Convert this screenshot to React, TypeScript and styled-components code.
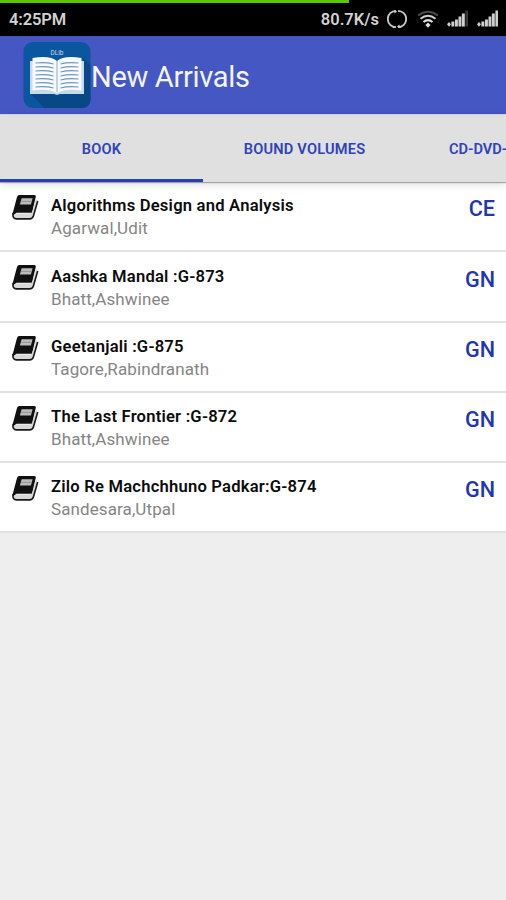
import React from "react";
import styled, { createGlobalStyle } from "styled-components";

const GlobalStyle = createGlobalStyle`
  * { box-sizing: border-box; }
  body {
    margin: 0;
    background: #eeeeee;
    font-family: Roboto, "Liberation Sans", sans-serif;
  }
`;

const Screen = styled.div`
  width: 506px;
  height: 900px;
  display: flex;
  flex-direction: column;
  overflow: hidden;
  background: #eeeeee;
`;

const StatusBar = styled.header`
  flex: none;
  height: 36px;
  display: flex;
  flex-direction: column;
  background: #000;
  color: #d2d2d2;
`;

const Progress = styled.div`
  width: 349px;
  height: 2.5px;
  background: #5cc800;
`;

const StatusRow = styled.div`
  flex: 1;
  display: flex;
  align-items: center;
  padding: 0 7px 0 9px;
`;

const Clock = styled.span`
  flex: 1;
  font-size: 16.5px;
  font-weight: 600;
  letter-spacing: -0.1px;
`;

const Speed = styled.span`
  font-size: 16.5px;
  font-weight: 600;
  margin-right: 8px;
`;

const StatusIcons = styled.div`
  display: flex;
  align-items: center;
  gap: 8px;

  > :first-child {
    margin-right: 2px;
  }
`;

const AppBar = styled.div`
  flex: none;
  height: 78px;
  display: flex;
  align-items: center;
  padding-left: 23px;
  background: #4457c3;
`;

const AppTitle = styled.h1`
  margin: 3px 0 0;
  font-size: 29px;
  font-weight: 400;
  line-height: 36px;
  letter-spacing: -0.3px;
  color: #f3f5ff;
  white-space: nowrap;
`;

const Tabs = styled.nav`
  flex: none;
  position: relative;
  z-index: 1;
  height: 68px;
  display: flex;
  background: #e0e0e0;
  border-top: 1px solid #cfcfdd;
  box-shadow: 0 1px 1px rgba(0, 0, 0, 0.3), 0 3px 8px rgba(0, 0, 0, 0.12);
`;

const Tab = styled.div<{ $active?: boolean; $peek?: boolean }>`
  flex: ${(p) => (p.$peek ? "1" : "none")};
  width: ${(p) => (p.$peek ? "auto" : "203px")};
  display: flex;
  align-items: center;
  justify-content: ${(p) => (p.$peek ? "flex-start" : "center")};
  padding-top: ${(p) => (p.$active ? 3 : 0)}px;
  padding-left: ${(p) => (p.$peek ? 43 : 0)}px;
  border-bottom: ${(p) => (p.$active ? "3px solid #283fb4" : "none")};
  font-size: 14.6px;
  font-weight: 600;
  letter-spacing: ${(p) => (p.$peek ? 0 : 0.2)}px;
  color: #2f43b8;
  white-space: nowrap;
`;

const List = styled.ul`
  flex: none;
  margin: 0;
  padding: 0;
  list-style: none;
`;

const Row = styled.li`
  height: 70.25px;
  display: flex;
  align-items: flex-start;
  padding: 12px 11px 0 12px;
  background: #fff;
  border-bottom: 2px solid #e2e2e2;
`;

const Details = styled.div`
  flex: 1;
  margin: 0.4px 0 0 12px;
`;

const Title = styled.div`
  font-size: 16.6px;
  font-weight: 600;
  line-height: 23px;
  letter-spacing: 0.21px;
  color: #0c0c0c;
  white-space: nowrap;
`;

const Author = styled.div`
  font-size: 17px;
  line-height: 23px;
  letter-spacing: 0.1px;
  color: #858585;
`;

const Category = styled.div`
  margin-top: 0.4px;
  font-size: 21.6px;
  font-weight: 500;
  line-height: 30px;
  color: #2236b0;
`;

const BookIcon = () => (
  <svg width="27" height="27" viewBox="0 0 27 27">
    <path d="M7.2 1 H22.3 Q24.2 1 23.8 2.8 L20 18.8 H4.5 L1 21.5 Q.4 20.6 .9 18.6 L5 3 Q5.6 1 7.2 1Z" fill="#101010" />
    <path d="M4.5 19.6 H17.8 Q19.8 19.6 20.4 17.8 L24 4.5 L25.3 6.5 L21.2 21.5 Q20.3 24.3 18 24.3 H4.6 Q1.8 24.2 1.9 21.9 Q2 19.8 4.5 19.6Z" fill="#d8d8d8" />
    <path d="M1.1 18.8 Q.2 24.9 4.5 24.9 H17.6 Q20.5 24.9 21.4 22 L25.7 7" fill="none" stroke="#181818" strokeWidth="1.6" />
    <path d="M9.6 4.3 H20.6 L18.9 10.6 H7.9Z" fill="#bcbcbc" />
    <path d="M8.8 7.4 H19.8" stroke="#8a8a8a" strokeWidth="0.8" />
  </svg>
);

const AppLogo = () => (
  <svg width="68" height="68" viewBox="0 0 68 68">
    <rect x="0.5" y="1" width="67" height="66" rx="9" fill="#0a579f" />
    <path d="M7 52 L21 67 H58.5 Q67.5 67 67.5 58 V24 L60 17 V52Z" fill="#084886" />
    <text x="34" y="13.5" textAnchor="middle" fontSize="6.5" fill="#c6dcf0">DLib</text>
    <path d="M7 20 H61 V53 H37 L34 54 L31 53 H7Z" fill="#c6daee" />
    <path d="M9.5 17 Q27 14 34 20 Q41 14 58.5 17 V49.5 Q43 47 34 52 Q25 47 9.5 49.5Z" fill="#f6faff" />
    <path d="M34 20V51" stroke="#a8c3dd" strokeWidth="1.4" />
    <g fill="none" stroke="#7297b6" strokeWidth="1.2">
      {[22, 26, 30, 34, 38, 42, 46].map((y) => (
        <path key={y} d={`M12.5 ${y} Q23 ${y - 1} 30.5 ${y + 1} M37.5 ${y + 1} Q45 ${y - 1} 55.5 ${y}`} />
      ))}
    </g>
  </svg>
);

const SyncIcon = () => (
  <svg width="20" height="20" viewBox="0 0 20 20" fill="none" stroke="#c8c8c8" strokeWidth="1.8">
    <path d="M9 1.8 A8.2 8.2 0 0 0 9 18.2 M11 1.8 A8.2 8.2 0 0 1 11 18.2" />
    <path d="M7 1 L10.2 2.6 L7.5 4.6Z M13 19 L9.8 17.4 L12.5 15.4Z" fill="#c8c8c8" stroke="none" />
  </svg>
);

const WifiIcon = () => (
  <svg width="22" height="18" viewBox="0 0 22 18" fill="none" strokeWidth="2">
    <path d="M1 5.5 Q11 -2 21 5.5" stroke="#484848" />
    <path d="M3.5 8.7 Q11 2.8 18.5 8.7" stroke="#cfcfcf" />
    <path d="M6.5 12 Q11 8.2 15.5 12" stroke="#dedede" />
    <path d="M11 12.6 L13.6 15 L11 17.7 L8.4 15Z" fill="#dedede" />
  </svg>
);

const SignalIcon = ({ weak }: { weak?: boolean }) => (
  <svg width="22" height="18" viewBox="0 0 22 18" fill="#cfcfcf">
    <path d="M0 14.3 L2 12 L4 14.3 L2 16.8Z" />
    <rect x="4.4" y="11.5" width="2.9" height="5" />
    <rect x="8" y="9.5" width="2.9" height="7" />
    <rect x="11.5" y="6.5" width="2.9" height="10" />
    <rect x="14.9" y="3.5" width="2.9" height="13" />
    <rect x="18.4" y="0.5" width="2.6" height="16" fill={weak ? "#373737" : "#cfcfcf"} />
  </svg>
);

const books = [
  { title: "Algorithms Design and Analysis", author: "Agarwal,Udit", category: "CE" },
  { title: "Aashka Mandal :G-873", author: "Bhatt,Ashwinee", category: "GN" },
  { title: "Geetanjali :G-875", author: "Tagore,Rabindranath", category: "GN" },
  { title: "The Last Frontier :G-872", author: "Bhatt,Ashwinee", category: "GN" },
  { title: "Zilo Re Machchhuno Padkar:G-874", author: "Sandesara,Utpal", category: "GN" },
];

export default function App() {
  return (
    <Screen>
      <GlobalStyle />
      <StatusBar>
        <Progress />
        <StatusRow>
          <Clock>4:25PM</Clock>
          <Speed>80.7K/s</Speed>
          <StatusIcons>
            <SyncIcon />
            <WifiIcon />
            <SignalIcon weak />
            <SignalIcon />
          </StatusIcons>
        </StatusRow>
      </StatusBar>
      <AppBar>
        <AppLogo />
        <AppTitle>New Arrivals</AppTitle>
      </AppBar>
      <Tabs>
        <Tab $active>BOOK</Tab>
        <Tab>BOUND VOLUMES</Tab>
        <Tab $peek>CD-DVD-</Tab>
      </Tabs>
      <List>
        {books.map((book) => (
          <Row key={book.title}>
            <BookIcon />
            <Details>
              <Title>{book.title}</Title>
              <Author>{book.author}</Author>
            </Details>
            <Category>{book.category}</Category>
          </Row>
        ))}
      </List>
    </Screen>
  );
}
